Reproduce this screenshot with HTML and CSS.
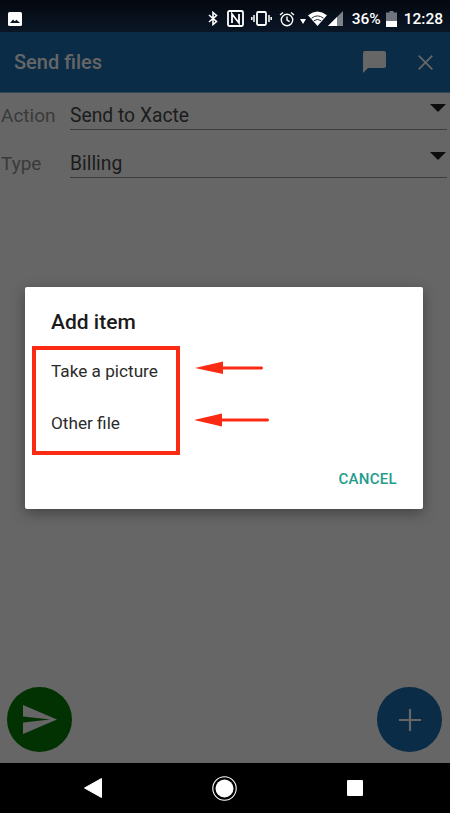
FILE: index.html
```html
<!DOCTYPE html>
<html lang="en">
<head>
    <meta charset="UTF-8">
    <meta name="viewport" content="width=device-width, initial-scale=1.0">
    <title>Send files</title>
    <link rel="stylesheet" href="styles.css">
</head>
<body>
<div class="screen">
    <div class="status-bar">
        <svg class="st-image" width="14" height="14" viewBox="0 0 14 14"><rect width="14" height="14" rx="1.5" fill="#fff"/><path d="M2 11 L5 7.5 L6.8 9.3 L8.5 7.8 L12 11 Z" fill="#0a1626"/></svg>
        <div class="status-icons">
            <svg class="st-bt" width="10" height="15" viewBox="0 0 10 15"><path d="M1 4 L8.5 10.5 L5 13.5 V1.5 L8.5 4.5 L1 11" fill="none" stroke="#fff" stroke-width="1.6"/></svg>
            <svg class="st-nfc" width="17" height="17" viewBox="0 0 17 17"><rect x="1" y="1" width="15" height="15" rx="1.5" fill="none" stroke="#fff" stroke-width="1.8"/><path d="M5 13 V4 L12 13 V4" fill="none" stroke="#fff" stroke-width="1.8"/></svg>
            <svg class="st-vib" width="21" height="15" viewBox="0 0 21 15"><rect x="6" y="1" width="9" height="13" rx="1.2" fill="none" stroke="#fff" stroke-width="1.8"/><path d="M3 4 V11 M18 4 V11 M0.8 6 V9 M20.2 6 V9" stroke="#fff" stroke-width="1.5"/></svg>
            <svg class="st-alarm" width="16" height="16" viewBox="0 0 16 16"><circle cx="8" cy="9" r="5.7" fill="none" stroke="#fff" stroke-width="1.4"/><path d="M8 5.5 V9.2 L10.6 10.7 M1 4 L4 1.5 M15 4 L12 1.5" fill="none" stroke="#fff" stroke-width="1.4"/></svg>
            <svg class="st-data" width="6" height="5" viewBox="0 0 6 5"><path d="M0 0 H6 L3 5 Z" fill="#fff"/></svg>
            <svg class="st-wifi" width="19" height="15" viewBox="0 0 19 15"><path d="M0 4.2 Q9.5 -3.2 19 4.2 L9.5 15 Z" fill="#fff"/><path d="M3.6 7.2 Q9.5 2.6 15.4 7.2 M5.8 9.8 Q9.5 7 13.2 9.8" fill="none" stroke="#0a1626" stroke-width="0.9"/></svg>
            <svg class="st-signal" width="15" height="15" viewBox="0 0 15 15"><path d="M0 15 L15 0 V15 Z" fill="#7d838a"/><path d="M0 15 L9 6 V15 Z" fill="#fff"/></svg>
            <span class="st-pct">36%</span>
            <svg class="st-batt" width="11" height="16" viewBox="0 0 11 16"><path d="M3.5 0 H7.5 V1.5 H11 V16 H0 V1.5 H3.5 Z" fill="#70767d"/><rect y="10" width="11" height="6" fill="#fff"/></svg>
            <span class="st-time">12:28</span>
        </div>
    </div>

    <header class="app-bar">
        <span class="app-title">Send files</span>
        <svg class="bar-chat" width="23" height="22" viewBox="0 0 23 22"><path d="M2 0 H21 Q23 0 23 2 V15 Q23 17 21 17 H5 L0 22 V2 Q0 0 2 0 Z" fill="#666"/></svg>
        <svg class="bar-close" width="15" height="15" viewBox="0 0 15 15"><path d="M0.7 0.7 L14.3 14.3 M14.3 0.7 L0.7 14.3" stroke="#666" stroke-width="1.8"/></svg>
    </header>

    <main class="content">
        <div class="field">
            <span class="field-label">Action</span>
            <div class="field-select"><span>Send to Xacte</span><i class="caret"></i></div>
        </div>
        <div class="field">
            <span class="field-label">Type</span>
            <div class="field-select"><span>Billing</span><i class="caret"></i></div>
        </div>

        <button class="fab fab-send" type="button">
            <svg width="34" height="29" viewBox="0 0 34 29"><path d="M0 0 L34 14.5 L0 29 V17.5 L27 14.5 L0 11.5 Z" fill="#666"/></svg>
        </button>
        <button class="fab fab-add" type="button">
            <svg width="22" height="22" viewBox="0 0 22 22"><path d="M11 0 V22 M0 11 H22" stroke="#666" stroke-width="2.2"/></svg>
        </button>
    </main>

    <nav class="nav-bar">
        <svg width="18" height="20" viewBox="0 0 18 20"><path d="M17.5 0.5 V19.5 L0.5 10 Z" fill="#fff" stroke="#fff" stroke-linejoin="round"/></svg>
        <svg width="25" height="25" viewBox="0 0 25 25"><circle cx="12.5" cy="12.5" r="11.7" fill="none" stroke="#fff" stroke-width="1.1"/><circle cx="12.5" cy="12.5" r="9" fill="#fff"/></svg>
        <div class="nav-square"></div>
    </nav>

    <section class="dialog">
        <h2 class="dialog-title">Add item</h2>
        <div class="dialog-item">Take a picture</div>
        <div class="dialog-item">Other file</div>
        <div class="dialog-actions"><span class="dialog-cancel">CANCEL</span></div>
    </section>

    <!-- red annotations drawn over the screenshot -->
    <div class="mark-box"></div>
    <svg class="mark-arrow arrow-one" width="70" height="14" viewBox="0 0 70 14"><path d="M0 7 L28 0.5 V5.5 H67 Q69 7 67 8.5 H28 V13 Z" fill="#fb2a13"/></svg>
    <svg class="mark-arrow arrow-two" width="77" height="14" viewBox="0 0 77 14"><path d="M0 7 L28 0.5 V5.5 H74 Q76 7 74 8.5 H28 V13.5 Z" fill="#fb2a13"/></svg>
</div>
</body>
</html>
```

FILE: styles.css
```css
html, body {
    margin: 0;
    padding: 0;
}
body {
    font-family: Roboto, "Liberation Sans", sans-serif;
    background: #666;
}
.screen {
    position: relative;
    width: 450px;
    height: 813px;
    display: flex;
    flex-direction: column;
    overflow: hidden;
}

/* status bar */
.status-bar {
    height: 32px;
    flex: none;
    background: linear-gradient(#04080f, #0a1626);
    display: flex;
    align-items: center;
    justify-content: space-between;
    padding: 5px 7px 0 8px;
    box-sizing: border-box;
    color: #fff;
}
.status-icons {
    display: flex;
    align-items: center;
}
.status-icons svg {
    display: block;
}
.st-bt { margin-right: 9px; }
.st-nfc { margin-right: 7px; }
.st-vib { margin-right: 7px; }
.st-alarm { margin-right: 5px; }
.st-data { margin-right: 2px; margin-top: 6px; }
.st-wifi { margin-right: 1px; }
.st-signal { margin-right: 9px; }
.st-pct {
    font-size: 15.5px;
    font-weight: 500;
    margin-right: 5px;
}
.st-batt { margin-right: 7px; }
.st-time {
    font-size: 15.5px;
    font-weight: 500;
}

/* app bar */
.app-bar {
    height: 60px;
    flex: none;
    background: #0a2c46;
    border-bottom: 1px solid #2c4656;
    box-sizing: content-box;
    display: flex;
    align-items: center;
    padding: 0 17px 0 14px;
}
.app-title {
    flex: 1;
    font-size: 20px;
    font-weight: 500;
    color: #666;
}
.bar-chat { margin-right: 32px; }

/* form */
.content {
    flex: 1;
    position: relative;
    background: #666;
    padding: 0 3px 0 1px;
    display: flex;
    flex-direction: column;
    gap: 18px;
}
.field {
    display: flex;
    align-items: flex-end;
    height: 30px;
}
.field:first-child {
    margin-top: 7px;
}
.field-label {
    width: 69px;
    font-size: 19px;
    color: #3a3a3a;
    line-height: 24px;
    margin-bottom: 2px;
}
.field-select {
    flex: 1;
    display: flex;
    justify-content: space-between;
    height: 29px;
    border-bottom: 1px solid #3b3b3b;
    font-size: 19.3px;
    color: #1c1c1c;
    line-height: 32px;
}
.caret {
    width: 0;
    height: 0;
    margin: 4px 1px 0 0;
    border-left: 8px solid transparent;
    border-right: 8px solid transparent;
    border-top: 8px solid #0c0c0c;
}

/* action buttons */
.fab {
    position: absolute;
    bottom: 11px;
    width: 65px;
    height: 65px;
    padding: 0;
    border: none;
    border-radius: 50%;
    display: flex;
    align-items: center;
    justify-content: center;
}
.fab-send {
    left: 7px;
    background: #033202;
}
.fab-add {
    right: 8px;
    background: #0a2c46;
}

/* nav bar */
.nav-bar {
    height: 50px;
    flex: none;
    background: #000;
    display: flex;
    align-items: center;
    padding: 0 87px 0 84px;
    justify-content: space-between;
}
.nav-square {
    width: 16px;
    height: 16px;
    border-radius: 1px;
    background: #fff;
}

/* dialog */
.dialog {
    position: absolute;
    left: 25px;
    top: 287px;
    width: 398px;
    height: 222px;
    box-sizing: border-box;
    background: #fff;
    border-radius: 2px;
    box-shadow: 0 4px 14px rgba(0, 0, 0, 0.35);
    padding: 22px 26px 0;
    display: flex;
    flex-direction: column;
}
.dialog-title {
    margin: 0 0 10px;
    font-size: 21px;
    line-height: 26px;
    font-weight: 500;
    color: #1a1a1a;
}
.dialog-item {
    height: 52px;
    line-height: 52px;
    font-size: 17.2px;
    color: #2b2b2b;
}
.dialog-actions {
    display: flex;
    justify-content: flex-end;
    margin-top: 21px;
}
.dialog-cancel {
    font-size: 15px;
    font-weight: 500;
    letter-spacing: 0.3px;
    color: #1f9c8c;
}

/* annotations */
.mark-box {
    position: absolute;
    left: 32px;
    top: 346px;
    width: 148px;
    height: 109px;
    box-sizing: border-box;
    border: 4px solid #fb2a13;
}
.mark-arrow {
    position: absolute;
}
.arrow-one {
    left: 195px;
    top: 361px;
}
.arrow-two {
    left: 194px;
    top: 413px;
}
```
